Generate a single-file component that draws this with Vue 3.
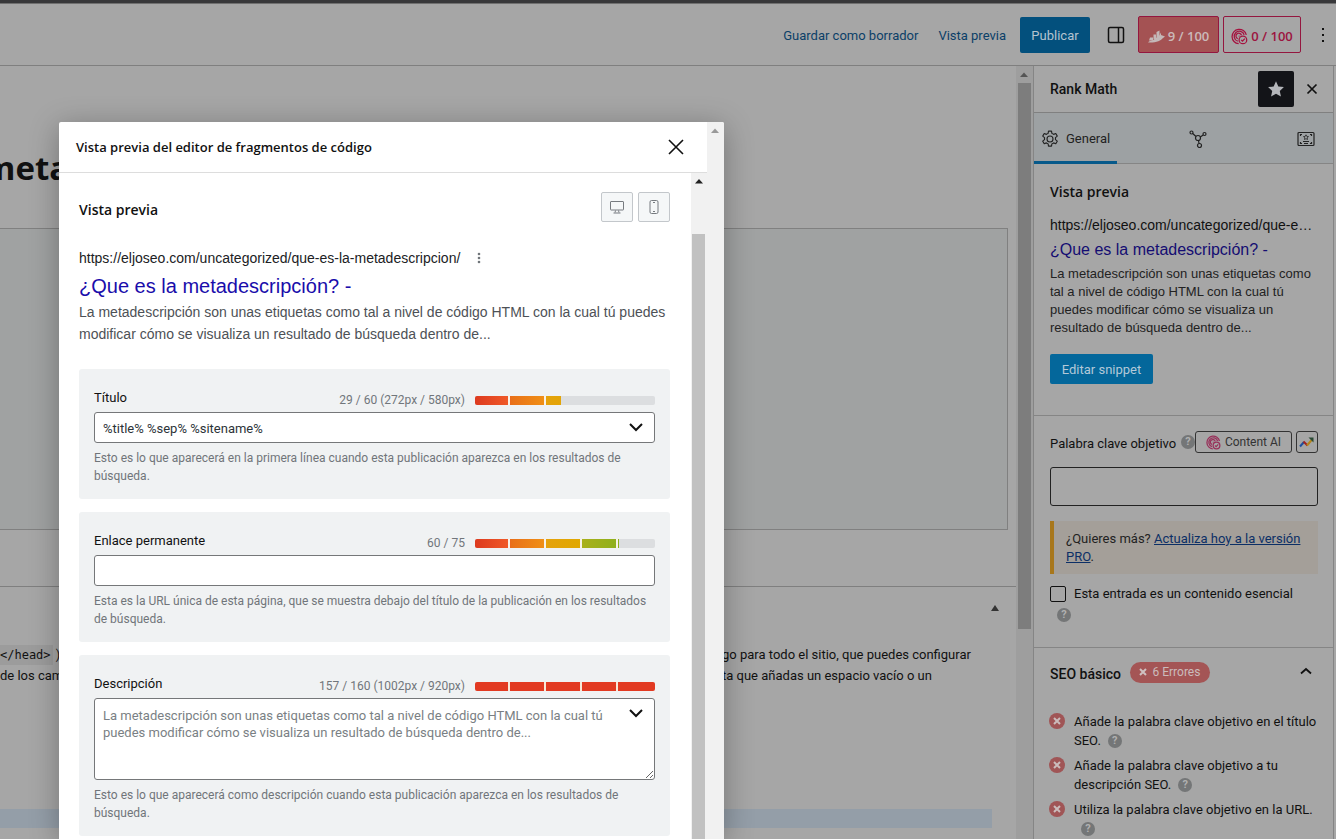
<script setup>
import { ref } from 'vue'

const keyword = ref('')
const pillar = ref(false)
const titleTpl = ref('%title% %sep% %sitename%')
const permalink = ref('')
const description = ref('')

const snippet = {
  url: 'https://eljoseo.com/uncategorized/que-es-la-metadescripcion/',
  title: '¿Que es la metadescripción? -',
  text: 'La metadescripción son unas etiquetas como tal a nivel de código HTML con la cual tú puedes modificar cómo se visualiza un resultado de búsqueda dentro de...',
}

const checks = [
  'Añade la palabra clave objetivo en el título SEO.',
  'Añade la palabra clave objetivo a tu descripción SEO.',
  'Utiliza la palabra clave objetivo en la URL.',
]

const levels = { title: 48, permalink: 80, description: 100 }
</script>

<template>
  <div class="editor">
    <div class="strip"></div>
    <header class="topbar">
      <a href="#" class="toplink">Guardar como borrador</a>
      <a href="#" class="toplink">Vista previa</a>
      <button class="publish">Publicar</button>
      <button class="icon-btn panel-toggle" aria-label="Ajustes">
        <svg width="18" height="18" viewBox="0 0 18 18" fill="none" stroke="#111" stroke-width="1.5"><rect x="1.5" y="1.5" width="15" height="15" rx="1.5" /><path d="M11.5 1.5v15" /></svg>
      </button>
      <button class="score filled">
        <svg width="17" height="13" viewBox="0 0 17 13" fill="#c4b8b8"><path d="M2 7.500h3v3H1zM5.500 4.500h2.500V9H5.500zM8.500 2l3-1.500V8h-3z" /><path d="M0 12.500c1-2 3-1.500 5-2.500s4-3 6-4l2-3.500V5l4 1.500-2 1.500C13 10.500 8 13 0 12.500z" /></svg>
        9 / 100
      </button>
      <button class="score outlined">
        <svg width="17" height="17" viewBox="0 0 20 20" fill="none" stroke="#a5123f" stroke-width="1.5"><path d="M9 18.500A8.500 8.500 0 1 1 18 8M8 15.500A6 6 0 1 1 15.500 8M8 12.500A3.300 3.300 0 1 1 12.300 8.500M9 9.500h1" /><circle cx="14" cy="14" r="4.500" /><path d="m12 14 1.500 1.500 2.800-3" /></svg>
        0 / 100
      </button>
      <button class="icon-btn more" aria-label="Opciones">
        <svg width="4" height="16" viewBox="0 0 4 16" fill="#111"><rect x="1" y="1" width="2" height="2" /><rect x="1" y="7" width="2" height="2" /><rect x="1" y="13" width="2" height="2" /></svg>
      </button>
    </header>

    <div class="workspace">
      <main class="canvas">
        <h1 class="post-title">meta</h1>
        <div class="block-box"></div>
        <section class="metabox">
          <button class="icon-btn collapse" aria-label="Alternar panel">
            <svg width="8" height="6" viewBox="0 0 8 6" fill="#333"><path d="M4 0 8 6H0z" /></svg>
          </button>
          <div class="help-row">
            <p><code>&lt;/head&gt;</code> )<br />de los cam</p>
            <p>go para todo el sitio, que puedes configurar<br />ta que añadas un espacio vacío o un</p>
          </div>
          <div class="blue-row"></div>
        </section>
      </main>
      <div class="track page-track">
        <svg width="16" height="17" viewBox="0 0 16 17" fill="#555"><path d="M8 6.500 12 11H4z" /></svg>
        <div class="thumb page-thumb"></div>
      </div>

      <aside class="sidebar">
        <div class="side-head">
          <strong>Rank Math</strong>
          <button class="star" aria-label="Fijar">
            <svg width="18" height="18" viewBox="0 0 20 20" fill="#b4b6ba"><path d="m10 1.500 2.600 5.700 6.200.700-4.600 4.200 1.300 6.200L10 15.200l-5.500 3.100 1.300-6.200L1.200 7.900l6.200-.7z" /></svg>
          </button>
          <button class="icon-btn side-close" aria-label="Cerrar">
            <svg width="12" height="12" viewBox="0 0 12 12" stroke="#111" stroke-width="1.7"><path d="m1.500 1.500 9 9m0-9-9 9" /></svg>
          </button>
        </div>
        <nav class="tabs">
          <button class="tab active">
            <svg width="18" height="18" viewBox="0 0 24 24" fill="none" stroke="#222" stroke-width="1.5"><circle cx="12" cy="12" r="4" /><path d="M9.500 4.500 10 1.500h4l.5 3 2.300 1.300 2.900-1.100 2 3.500-2.400 1.900v2.800l2.400 1.900-2 3.500-2.900-1.100-2.300 1.300-.5 3h-4l-.5-3-2.300-1.300-2.900 1.100-2-3.500 2.400-1.900v-2.800L2.300 8.200l2-3.500 2.900 1.100z" stroke-linejoin="round" /></svg>
            General
          </button>
          <button class="tab" aria-label="Schema">
            <svg width="18" height="18" viewBox="0 0 18 18" fill="none" stroke="#222" stroke-width="1.2"><circle cx="9" cy="8" r="2.500" /><circle cx="2.500" cy="2.500" r="1.500" /><circle cx="15.500" cy="4" r="1.500" /><circle cx="10.500" cy="15.500" r="2" /><path d="m3.700 3.500 3.300 3M11.300 7l2.900-2M9.500 10.500l.5 3" /></svg>
          </button>
          <button class="tab" aria-label="Social">
            <svg width="18" height="16" viewBox="0 0 18 16" fill="none" stroke="#222" stroke-width="1.2"><rect x="1" y="1.500" width="16" height="13" rx="1" /><path d="M3.500 5V3.500H5M13 3.500h1.500V5M3.500 11v1.500H5M13 12.500h1.500V11M6 10.500h6M7 12.500h4" /><path d="m9 3.800.8 1.600 1.700.200-1.300 1.200.3 1.700L9 7.700l-1.500.8.3-1.700-1.300-1.200 1.700-.2z" stroke-width=".8" /></svg>
          </button>
        </nav>

        <section class="side-preview">
          <h3>Vista previa</h3>
          <div class="side-url">{{ snippet.url }}</div>
          <div class="side-title">{{ snippet.title }}</div>
          <p class="side-text">{{ snippet.text }}</p>
          <button class="edit">Editar snippet</button>
        </section>

        <section class="side-keyword">
          <div class="kw-row">
            <label for="kw">Palabra clave objetivo</label>
            <span class="help kw-help">?</span>
            <button class="mini content-ai">
              <svg width="15" height="15" viewBox="0 0 20 20" fill="none" stroke="#98305a" stroke-width="1.7"><path d="M9 18.500A8.500 8.500 0 1 1 18 8M8 15.500A6 6 0 1 1 15.500 8M8 12.500A3.300 3.300 0 1 1 12.300 8.500M9 9.500h1" /><circle cx="14" cy="14" r="4.500" /><path d="m12 14 1.500 1.500 2.800-3" /></svg>
              Content AI
            </button>
            <button class="mini trends" aria-label="Tendencias">
              <svg width="16" height="14" viewBox="0 0 16 14" fill="none" stroke-width="2"><path d="m1 11.500 4-4.500" stroke="#1f4fa0" /><path d="m4.500 6.500 4 4" stroke="#a02323" /><path d="m8 10.500 5.500-6.500" stroke="#b5861a" /><path d="M9.500 2.500h5v5z" fill="#2a4a35" stroke="none" /></svg>
            </button>
          </div>
          <input id="kw" v-model="keyword" class="kw-input" type="text" />
          <div class="notice">¿Quieres más? <a href="#">Actualiza hoy a la versión PRO</a>.</div>
          <label class="pillar">
            <input v-model="pillar" type="checkbox" />
            <span>Esta entrada es un contenido esencial</span>
          </label>
          <span class="help pillar-help">?</span>
        </section>

        <section class="side-seo">
          <div class="seo-head">
            <strong>SEO básico</strong>
            <span class="errors"><svg width="8" height="8" viewBox="0 0 8 8" stroke="#cfc0c0" stroke-width="2"><path d="m1 1 6 6m0-6L1 7" /></svg>6 Errores</span>
            <button class="icon-btn seo-toggle" aria-label="Contraer">
              <svg width="12" height="8" viewBox="0 0 12 8" fill="none" stroke="#111" stroke-width="1.8"><path d="m1 6.500 5-4.500 5 4.500" /></svg>
            </button>
          </div>
          <ul class="checks">
            <li v-for="c in checks" :key="c">
              <svg width="16" height="16" viewBox="0 0 16 16"><circle cx="8" cy="8" r="8" fill="#a05556" /><path d="m5 5 6 6m0-6-6 6" stroke="#cbbcbc" stroke-width="2" /></svg>
              <div>{{ c }}<span class="help">?</span></div>
            </li>
          </ul>
        </section>
      </aside>
    </div>

    <div class="modal" role="dialog" aria-labelledby="modal-title">
      <div class="modal-main">
        <div class="modal-head">
          <h2 id="modal-title">Vista previa del editor de fragmentos de código</h2>
          <button class="icon-btn" aria-label="Cerrar ventana">
            <svg width="16" height="16" viewBox="0 0 16 16" stroke="#111" stroke-width="1.6"><path d="m1 1 14 14m0-14L1 15" /></svg>
          </button>
        </div>
        <div class="modal-scroll">
          <div class="modal-body">
            <div class="preview-head">
              <h3>Vista previa</h3>
              <div class="devices">
                <button aria-label="Escritorio">
                  <svg width="16" height="14" viewBox="0 0 16 14" fill="none" stroke="#777b80"><rect x="1.500" y="1.500" width="13" height="8.500" rx=".5" /><path d="M6.500 10.500 6 12.500M9.500 10.500l.5 2M4.500 13h7" /></svg>
                </button>
                <button aria-label="Móvil">
                  <svg width="10" height="16" viewBox="0 0 10 16" fill="none" stroke="#777b80"><rect x="1" y="1.500" width="8" height="13" rx="1.500" /><path d="M4 3.500h2M4 12.500h2" /></svg>
                </button>
              </div>
            </div>
            <div class="serp-url">
              <span>{{ snippet.url }}</span>
              <svg width="4" height="12" viewBox="0 0 4 12" fill="#70757a"><circle cx="2" cy="2" r="1.300" /><circle cx="2" cy="6" r="1.300" /><circle cx="2" cy="10" r="1.300" /></svg>
            </div>
            <div class="serp-title">{{ snippet.title }}</div>
            <p class="serp-text">{{ snippet.text }}</p>

            <div class="card">
              <div class="card-head">
                <label for="f-title">Título</label>
                <span class="count">29 / 60 (272px / 580px)</span>
                <div class="bar"><div class="fill" :style="{ width: levels.title + '%' }"></div></div>
              </div>
              <div class="field">
                <input id="f-title" v-model="titleTpl" type="text" />
                <button class="icon-btn chevron" aria-label="Variables">
                  <svg width="14" height="9" viewBox="0 0 14 9" fill="none" stroke="#111" stroke-width="2"><path d="m1 1 6 6 6-6" /></svg>
                </button>
              </div>
              <p>Esto es lo que aparecerá en la primera línea cuando esta publicación aparezca en los resultados de búsqueda.</p>
            </div>

            <div class="card">
              <div class="card-head">
                <label for="f-link">Enlace permanente</label>
                <span class="count">60 / 75</span>
                <div class="bar"><div class="fill" :style="{ width: levels.permalink + '%' }"></div></div>
              </div>
              <div class="field"><input id="f-link" v-model="permalink" type="text" /></div>
              <p>Esta es la URL única de esta página, que se muestra debajo del título de la publicación en los resultados de búsqueda.</p>
            </div>

            <div class="card">
              <div class="card-head">
                <label for="f-desc">Descripción</label>
                <span class="count">157 / 160 (1002px / 920px)</span>
                <div class="bar"><div class="fill over" :style="{ width: levels.description + '%' }"></div></div>
              </div>
              <div class="field">
                <textarea id="f-desc" v-model="description" :placeholder="snippet.text"></textarea>
                <button class="icon-btn chevron" aria-label="Variables">
                  <svg width="14" height="9" viewBox="0 0 14 9" fill="none" stroke="#111" stroke-width="2"><path d="m1 1 6 6 6-6" /></svg>
                </button>
              </div>
              <p>Esto es lo que aparecerá como descripción cuando esta publicación aparezca en los resultados de búsqueda.</p>
            </div>
          </div>
          <div class="track inner-track">
            <svg width="16" height="17" viewBox="0 0 16 17" fill="#222"><path d="M8 6 12 10.500H4z" /></svg>
            <div class="thumb inner-thumb"></div>
          </div>
        </div>
      </div>
      <div class="track outer-track">
        <svg width="16" height="17" viewBox="0 0 16 17" fill="#999"><path d="M8 6.500 12 11H4z" /></svg>
      </div>
    </div>
  </div>
</template>

<style>
body { margin: 0; }
</style>

<style scoped>
* { box-sizing: border-box; }
h1, h2, h3, p, ul { margin: 0; padding: 0; }
button, input, textarea { font: inherit; margin: 0; }
button { padding: 0; border: 0; background: none; color: inherit; }
svg { display: block; flex: none; }
.editor {
  position: relative;
  display: flex;
  flex-direction: column;
  height: 100vh;
  overflow: hidden;
  background: #a6a6a6;
  color: #111;
  font: 13px/18px Roboto, "Open Sans", sans-serif;
}
.icon-btn { display: flex; align-items: center; justify-content: center; }

.strip { flex: none; height: 4px; background: #38383a; border-bottom: 1px solid #707070; }
.topbar {
  flex: none;
  display: flex;
  align-items: center;
  justify-content: flex-end;
  height: 62px;
  padding-right: 11px;
  border-bottom: 1px solid #7f7f7f;
}
.toplink { color: #0b3f68; text-decoration: none; margin-right: 20px; padding-top: 3px; }
.toplink + .toplink { margin-right: 14px; }
.publish { height: 36px; width: 70px; padding-top: 3px; border-radius: 2px; background: #03507d; color: #b4c4d0; }
.panel-toggle { margin: 0 13px 0 17px; }
.score {
  display: flex;
  align-items: center;
  justify-content: center;
  gap: 3px;
  height: 37px;
  width: 81px;
  padding-top: 3px;
  margin-right: 4px;
  border: 1px solid #94163f;
  border-radius: 2px;
  font: 600 13px/18px "Open Sans", sans-serif;
}
.filled { background: #a45253; color: #cbbaba; }
.outlined { width: 78px; color: #9c1440; margin-right: 20px; }

.workspace { flex: 1; display: flex; min-height: 0; }
.canvas { flex: 1; min-width: 0; overflow: hidden; }
.post-title { margin: 81px 0 0 -17px; font: 700 33px/42px "Open Sans", sans-serif; }
.block-box {
  height: 302px;
  margin: 39px 8px 0 0;
  border: 1px solid #808080;
  border-left: 0;
  background: #a0a2a2;
}
.metabox { margin-top: 56px; border-top: 1px solid #7f7f7f; padding-right: 24px; }
.collapse { width: 8px; height: 6px; margin: 18px -7px 0 auto; }
.help-row { display: flex; margin-top: 33px; line-height: 21px; white-space: nowrap; }
.help-row p:first-child { width: 73%; }
.help-row p:last-child { flex: none; width: 270px; }
code { font: 12px "DejaVu Sans Mono", monospace; background: #9c9c9c; padding: 3px 2px 3px 0; }
.blue-row { margin-top: 123px; height: 19px; background: #949ea8; }

.track { flex: none; width: 16px; background: #f1f1f1; }
.page-track { background: #9e9e9e; width: 17px; }
.page-thumb { width: 13px; margin-left: 2px; height: 546px; background: #7d7d7d; }

.sidebar {
  flex: none;
  width: 301px;
  margin-right: 2px;
  border: 1px solid #858585;
  border-width: 0 1px;
  overflow: hidden;
}
.side-head { display: flex; align-items: center; height: 47px; padding: 0 15px 0 16px; border-bottom: 1px solid #808080; }
.side-head strong { flex: 1; }
strong { font: 500 14px/18px Roboto, sans-serif; }
.star { display: flex; align-items: center; justify-content: center; width: 36px; height: 36px; background: #131418; border-radius: 2px; }
.side-close { margin-left: 12px; }
.tabs { display: flex; height: 51px; background: #9da1a3; border-bottom: 1px solid #858585; justify-content: space-between; }
.tab { display: flex; align-items: center; gap: 7px; height: 51px; padding: 0 18px 0 7px; color: #222; }
.tab.active { padding: 3px 7px 0 7px; border-bottom: 3px solid #07598a; }

.side-preview { height: 252px; padding: 18px 16px 0; border-bottom: 1px solid #858585; font-family: "Liberation Sans", Arial, sans-serif; }
h3 { font: 600 14px/20px "Open Sans", "Noto Sans", sans-serif; }
.side-url { margin: 13px 2px 0 0; font-size: 14px; line-height: 20px; white-space: nowrap; overflow: hidden; text-overflow: ellipsis; }
.side-title { margin-top: 3px; font-size: 16px; line-height: 24px; color: #140d72; }
.side-text { margin-top: 3px; line-height: 18px; color: #222; }
.edit { height: 30px; width: 103px; padding-top: 2px; margin-top: 17px; border-radius: 2px; background: #04679b; color: #b3c9d8; font-family: Roboto, sans-serif; }

.side-keyword { height: 232px; padding: 15px 15px 0 16px; border-bottom: 1px solid #858585; }
.kw-row { display: flex; align-items: center; height: 22px; white-space: nowrap; }
.kw-row label { padding-top: 3px; }
.help {
  display: inline-block;
  width: 14px;
  height: 14px;
  border-radius: 7px;
  background: #747677;
  color: #b0b0b0;
  font-size: 11px;
  line-height: 14px;
  font-weight: 700;
  text-align: center;
}
.kw-help { margin-left: auto; }
.mini { display: flex; align-items: center; justify-content: center; height: 22px; border: 1px solid #333; border-radius: 3px; }
.content-ai { width: 97px; gap: 4px; color: #333; font-size: 12px; }
.trends { width: 22px; margin-left: 4px; }
.kw-input { display: block; width: 100%; height: 39px; margin-top: 14px; border: 1px solid #222; border-radius: 3px; background: #a7a7a7; }
.notice { margin-top: 15px; padding: 9px 8px 8px 12px; border-left: 4px solid #a8771b; background: #a49f99; color: #222; }
.notice a { color: #0c2f66; }
.pillar { display: flex; align-items: center; gap: 8px; margin-top: 11px; white-space: nowrap; }
.pillar input { appearance: none; width: 16px; height: 16px; border: 1px solid #111; border-radius: 2px; }
.pillar-help { display: block; margin: 5px 0 0 7px; }

.side-seo { padding: 14px 16px 0; }
.seo-head { display: flex; align-items: center; height: 22px; }
.seo-head strong { padding-top: 2px; }
.errors { display: flex; align-items: center; justify-content: center; gap: 5px; width: 80px; height: 21px; margin: 0 0 2px 9px; border-radius: 11px; background: #a45555; color: #cbbcbc; font-size: 12px; }
.seo-toggle { margin: 0 5px 4px auto; }
.checks { margin-top: 28px; list-style: none; }
.checks li { display: flex; gap: 9px; margin: 0 -4px 6px -1px; line-height: 19px; }
.checks li > svg { margin-top: 1px; }
.checks li > div { flex: 1; }
.checks .help { margin-left: 7px; vertical-align: 1px; }

.modal {
  position: absolute;
  top: 122px;
  left: 59px;
  bottom: 0;
  width: 665px;
  max-width: 92%;
  display: flex;
  background: #fff;
  border-radius: 2px 2px 0 0;
  box-shadow: 0 5px 30px rgba(0, 0, 0, 0.3);
  overflow: hidden;
}
.modal-main { flex: 1; min-width: 0; display: flex; flex-direction: column; }
.modal-head { flex: none; display: flex; align-items: center; justify-content: space-between; height: 51px; padding: 0 23px 0 17px; border-bottom: 1px solid #ddd; }
h2 { font: 600 13px/18px "Open Sans", sans-serif; }
.modal-scroll { flex: 1; min-height: 0; display: flex; overflow: hidden; }
.modal-body { flex: 1; min-width: 0; padding: 19px 21px 0 20px; }
.preview-head { display: flex; justify-content: space-between; height: 30px; }
.preview-head h3 { margin-top: 8px; }
.devices { display: flex; gap: 5px; }
.devices button { display: flex; align-items: center; justify-content: center; width: 32px; height: 30px; border: 1px solid #c3c7cb; border-radius: 2px; background: #f5f7f8; }
.serp-url { display: flex; align-items: center; gap: 17px; margin-top: 25px; font: 14px/22px "Liberation Sans", Arial, sans-serif; color: #202124; }
.serp-title { margin-top: 4px; font: 20px/26px "Liberation Sans", Arial, sans-serif; color: #1a0dab; }
.serp-text { margin: 2px 0 24px; font: 14px/22px "Liberation Sans", Arial, sans-serif; color: #4d5156; }
.card { margin-bottom: 13px; padding: 17px 15px 14px; border-radius: 3px; background: #f0f2f3; }
.card-head { display: flex; align-items: center; height: 26px; padding-bottom: 4px; }
.card-head label { flex: 1; padding-top: 2px; }
.count { font-size: 12px; color: #71767b; margin: 6px 10px 0 0; }
.bar { width: 180px; height: 9px; margin-top: 6px; border-radius: 2px; background: #dcdee0; overflow: hidden; }
.fill {
  height: 100%;
  background:
    repeating-linear-gradient(90deg, transparent 0 33px, #f8f2e8 33px 35px, transparent 35px 36px) 0 0 / 160px 100% no-repeat,
    linear-gradient(90deg, #dd3a1f, #f05a28 34px, #e97018 36px, #f09015 70px, #e5a20c 71px, #e0a800 106px, #a9b01a 107px, #8fb01c 142px, #7fae28) 0 0 / 180px 100%;
}
.over {
  background: repeating-linear-gradient(90deg, transparent 0 33px, #f8e8d8 33px 35px, transparent 35px 36px) 0 0 / 160px 100% no-repeat, #e23a22;
}
.field { position: relative; }
.field input, .field textarea {
  display: block;
  width: 100%;
  height: 31px;
  padding: 2px 8px 0;
  border: 1px solid #757779;
  border-radius: 3px;
  background: #fff;
  color: #2c3338;
}
.field textarea { height: 82px; padding: 8px 36px 7px 8px; line-height: 17px; resize: vertical; }
.field textarea::placeholder { color: #7a7f84; }
.chevron { position: absolute; top: 11px; right: 12px; }
.card p { margin-top: 6px; font-size: 12px; line-height: 18px; color: #70757a; }
.inner-thumb { width: 13px; height: 100%; margin: 44px 0 0 1px; background: #c1c1c1; }
.outer-track { width: 17px; }
</style>
